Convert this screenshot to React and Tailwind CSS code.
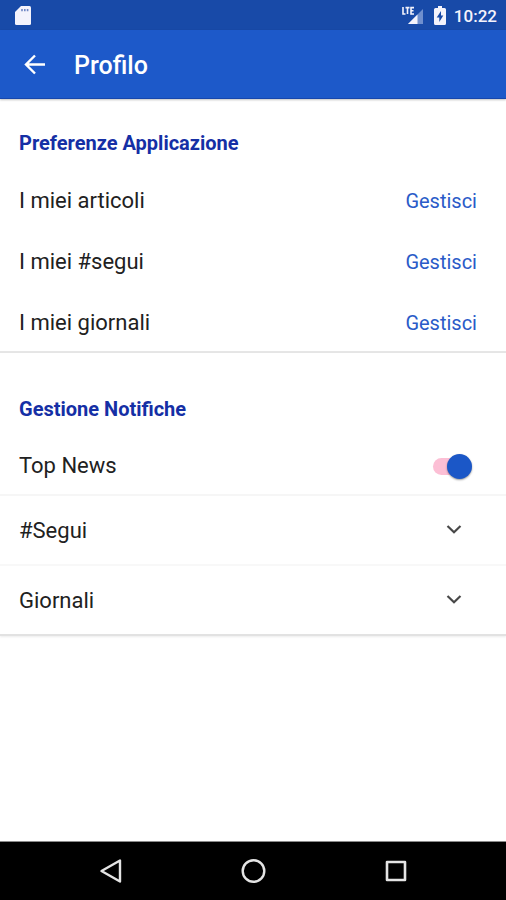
import React, { useState } from "react";

const links = ["I miei articoli", "I miei #segui", "I miei giornali"];

const App = () => {
  const [topNews, setTopNews] = useState(true);
  const [open, setOpen] = useState("");

  const toggle = (name) => setOpen(open === name ? "" : name);

  return (
    <div className="min-h-screen flex flex-col bg-white font-['Roboto',sans-serif] text-[#212121]">
      <StatusBar />

      <header className="relative h-[69px] flex items-center bg-[#1d59c9] pt-0.5 pl-[22px] border-b border-[#1747ac] shadow-[0_1px_2px_rgba(0,0,0,0.25)]">
        <button aria-label="Indietro" className="text-white">
          <svg viewBox="0 0 26 26" className="block size-[26px]" fill="none" stroke="currentColor" strokeWidth="2.4">
            <path d="M23 12.5H4.5M13 3.5 4 12.5l9 9" />
          </svg>
        </button>
        <h1 className="ml-[26px] pt-0.5 text-[25px] leading-8 font-medium text-white">Profilo</h1>
      </header>

      <main className="flex-1">
        <section className="pt-8 border-b-2 border-[#e6e6e6]">
          <SectionTitle>Preferenze Applicazione</SectionTitle>
          <ul className="mt-[13px]">
            {links.map((label) => (
              <li key={label} className="h-[61px] pt-1 flex items-center justify-between pl-[19px] pr-[29px]">
                <span className="text-[22px] leading-7">{label}</span>
                <a href="#gestisci" className="text-xl leading-7 text-[#2a5bc8]">
                  Gestisci
                </a>
              </li>
            ))}
          </ul>
        </section>

        <section className="pt-11 border-b-2 border-[#e2e2e2] shadow-[0_1px_2px_rgba(0,0,0,0.08)]">
          <SectionTitle>Gestione Notifiche</SectionTitle>
          <label className="mt-[13px] h-[62px] pt-1 flex items-center justify-between pl-[19px] pr-[34px] border-b-2 border-[#f6f6f6]">
            <span className="text-[22px] leading-7">Top News</span>
            <Switch checked={topNews} onChange={(e) => setTopNews(e.target.checked)} />
          </label>
          <div className="border-b-2 border-[#f8f8f8]">
            <Accordion label="#Segui" open={open === "segui"} onClick={() => toggle("segui")} />
          </div>
          <Accordion label="Giornali" open={open === "giornali"} onClick={() => toggle("giornali")} />
        </section>
      </main>

      <NavBar />
    </div>
  );
};

/* ---------- Small UI Helpers ---------- */

const SectionTitle = ({ children }) => (
  <h2 className="pl-[19px] text-xl leading-6 font-bold text-[#152fa5]">{children}</h2>
);

const Switch = (props) => (
  <span className="relative flex items-center w-[39px] h-[26px]">
    <input
      type="checkbox"
      role="switch"
      {...props}
      className="peer appearance-none w-9 h-[17px] rounded-full bg-[#d0d0d0] checked:bg-[#fcbfd5]"
    />
    <span className="absolute left-0 size-[25px] rounded-full bg-[#fafafa] shadow-[0_1px_2px_rgba(0,0,0,0.4)] pointer-events-none peer-checked:left-auto peer-checked:right-0 peer-checked:bg-[#1b57c7]" />
  </span>
);

const Accordion = ({ label, open, onClick }) => (
  <button
    onClick={onClick}
    aria-expanded={open}
    className="w-full h-[68px] pt-0.5 flex items-center justify-between pl-[19px] pr-11"
  >
    <span className="text-[22px] leading-7">{label}</span>
    <svg
      viewBox="0 0 16 16"
      className={`size-4 text-[#484848] ${open ? "rotate-180" : ""}`}
      fill="none"
      stroke="currentColor"
      strokeWidth="2.2"
    >
      <path d="m1.5 3 6.5 6.2L14.5 3" />
    </svg>
  </button>
);

const StatusBar = () => (
  <div className="h-[30px] flex items-center justify-between bg-[#184aa8] pl-[15px] pr-[9px] text-[#f4f3fc]">
    {/* sd card */}
    <svg viewBox="0 0 16 19" className="w-4 h-[19px]">
      <path d="M6 0h8.5A1.5 1.5 0 0 1 16 1.5v16a1.5 1.5 0 0 1-1.5 1.5h-13A1.5 1.5 0 0 1 0 17.5V6z" fill="currentColor" />
      <path d="M7 3v2.2M9.8 3v2.2M12.6 3v2.2" stroke="#6f86c4" strokeWidth="1.6" />
    </svg>
    <div className="flex items-center">
      {/* lte signal */}
      <svg viewBox="0 0 22 19" className="w-[22px] h-[19px]">
        <path d="M21 3v15H6z" fill="#6f8fce" />
        <path d="M15.5 8.5V18H6z" fill="currentColor" />
        <path d="M1 1v7h2.5M3.5 1.6h4M5.5 1.6V8M12 1.6H9V8h3M9 4.7h2.5" fill="none" stroke="currentColor" strokeWidth="1.6" />
      </svg>
      {/* battery */}
      <svg viewBox="0 0 12 19" className="ml-[10px] w-3 h-[19px]">
        <path d="M4 0h4v2h2.5A1.5 1.5 0 0 1 12 3.5v14a1.5 1.5 0 0 1-1.5 1.5h-9A1.5 1.5 0 0 1 0 17.5v-14A1.5 1.5 0 0 1 1.5 2H4z" fill="currentColor" />
        <path d="M7 5 2.7 11.5h2.6V16l4-6.5H7z" fill="#184aa8" />
      </svg>
      <span className="ml-2 pt-0.5 text-[17px] leading-6 font-medium">10:22</span>
    </div>
  </div>
);

const NavBar = () => (
  <nav className="h-[59px] flex items-center justify-center gap-[116px] bg-black border-t border-[#8a8a8a] text-[#e4e4e4]">
    <button aria-label="Indietro">
      <svg viewBox="0 0 26 26" className="block size-[26px]" fill="none" stroke="currentColor" strokeWidth="2.4" strokeLinejoin="round">
        <path d="M22 2.5v21L3.5 13z" />
      </svg>
    </button>
    <button aria-label="Home">
      <svg viewBox="0 0 26 26" className="block size-[26px]" fill="none" stroke="currentColor" strokeWidth="2.4">
        <circle cx="13.5" cy="13" r="10.8" />
      </svg>
    </button>
    <button aria-label="Recenti">
      <svg viewBox="0 0 26 26" className="block size-[26px]" fill="none" stroke="currentColor" strokeWidth="2.6" strokeLinejoin="round">
        <path d="M5 4h18v18H5z" />
      </svg>
    </button>
  </nav>
);

export default App;
